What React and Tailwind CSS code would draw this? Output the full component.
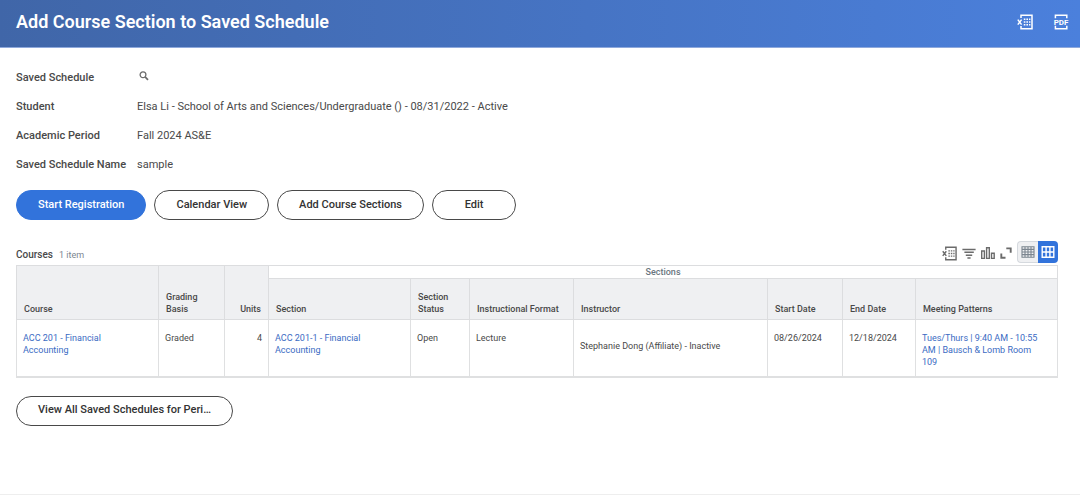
const fields = [
  { label: 'Saved Schedule', value: null },
  { label: 'Student', value: 'Elsa Li - School of Arts and Sciences/Undergraduate () - 08/31/2022 - Active' },
  { label: 'Academic Period', value: 'Fall 2024 AS&E' },
  { label: 'Saved Schedule Name', value: 'sample' },
]

const sectionColumns = [
  'Section',
  'Section Status',
  'Instructional Format',
  'Instructor',
  'Start Date',
  'End Date',
  'Meeting Patterns',
]

const rows = [
  {
    course: 'ACC 201 - Financial Accounting',
    grading: 'Graded',
    units: 4,
    section: 'ACC 201-1 - Financial Accounting',
    status: 'Open',
    format: 'Lecture',
    instructor: 'Stephanie Dong (Affiliate) - Inactive',
    start: '08/26/2024',
    end: '12/18/2024',
    meeting: 'Tues/Thurs | 9:40 AM - 10:55 AM | Bausch & Lomb Room 109',
  },
]

function ExcelIcon({ className }) {
  return (
    <svg viewBox="0 0 16 16" className={className} fill="none" stroke="currentColor" aria-hidden="true">
      <path d="M4 4V1.3h11v13.4H4V12" strokeWidth="1.5" />
      <path d="M.8 5.6l3.8 5M4.6 5.6l-3.8 5" strokeWidth="1.5" />
      <path d="M6.8 5.2h1.6M9.4 5.2H11M12 5.2h1.4M6.8 8h1.6M9.4 8H11M12 8h1.4M6.8 10.8h1.6M9.4 10.8H11M12 10.8h1.4" strokeWidth="1.5" />
    </svg>
  )
}

function PdfIcon({ className }) {
  return (
    <svg viewBox="0 0 16 16" className={className} fill="none" stroke="currentColor" aria-hidden="true">
      <path d="M2.4 4.2V1.3h11.4v2.9M2.4 11.8v2.9h11.4v-2.9" strokeWidth="1.5" />
      <text
        x="8"
        y="10.5"
        textAnchor="middle"
        fill="currentColor"
        stroke="none"
        className="font-['Roboto',sans-serif] text-[8px] font-bold"
      >
        PDF
      </text>
    </svg>
  )
}

function SearchIcon({ className }) {
  return (
    <svg viewBox="0 0 10 10" className={className} fill="none" stroke="currentColor" aria-hidden="true">
      <circle cx="4" cy="3.8" r="2.9" strokeWidth="1.3" />
      <path d="M6.1 5.9L9 8.8" strokeWidth="1.7" />
    </svg>
  )
}

function FilterIcon({ className }) {
  return (
    <svg viewBox="0 0 14 14" className={className} fill="none" stroke="currentColor" strokeWidth="1.5" aria-hidden="true">
      <path d="M.4 3.4h13.2M2.4 6.3h9.4M3.8 9.2h6.4M5.4 12h3.2" />
    </svg>
  )
}

function ChartIcon({ className }) {
  return (
    <svg viewBox="0 0 14 14" className={className} fill="none" stroke="currentColor" strokeWidth="1.4" aria-hidden="true">
      <path d="M.7 5h2.7v7.4H.7zM5.6 1.7h2.7v10.7H5.6zM10.5 7.2h2.7v5.2h-2.7z" />
    </svg>
  )
}

function ExpandIcon({ className }) {
  return (
    <svg viewBox="0 0 12 12" className={className} fill="none" stroke="currentColor" strokeWidth="1.9" aria-hidden="true">
      <path d="M6.3 1.4h4.4v4.4M1.3 6.6v4.2h4.2" />
    </svg>
  )
}

function GridIcon({ className }) {
  return (
    <svg viewBox="0 0 14 12" className={className} fill="none" stroke="currentColor" aria-hidden="true">
      <path d="M1 .8h12v10.4H1zM1 3.4h12M1 6h12M1 8.6h12M4 .8v10.4M7 .8v10.4M10 .8v10.4" strokeWidth="1.1" />
    </svg>
  )
}

function ExpandedGridIcon({ className }) {
  return (
    <svg viewBox="0 0 14 12" className={className} fill="none" stroke="currentColor" aria-hidden="true">
      <path d="M1.2 .8h11.6v10.4H1.2zM1.2 6h11.6M5.1 .8v10.4M8.9 .8v10.4" strokeWidth="1.4" />
    </svg>
  )
}

function PillButton({ primary, children }) {
  return (
    <button
      type="button"
      className={`h-[30px] min-w-[84px] rounded-full border px-[21px] text-[11px] font-medium ${
        primary ? 'border-[#3273db] bg-[#3273db] text-white' : 'border-[#494949] bg-white text-[#333333]'
      }`}
    >
      {children}
    </button>
  )
}

function HeaderCell({ children, className = '', ...props }) {
  return (
    <th
      scope="col"
      className={`border border-[#dcdddf] bg-[#eff0f2] px-[7px] pb-1 text-left align-bottom font-medium ${className}`}
      {...props}
    >
      {children}
    </th>
  )
}

function Cell({ children, className = 'pt-3' }) {
  return <td className={`border border-[#dfe0e1] px-[6px] align-top ${className}`}>{children}</td>
}

export default function App() {
  return (
    <div className="min-h-screen bg-white font-['Roboto',sans-serif] text-[#494949]">
      <header className="flex h-12 items-center justify-between border-b border-[#8fa9dc] bg-linear-to-r from-[#4066a8] to-[#4b80dc] pr-[11px] pl-4 text-white">
        <h1 className="pb-1 text-lg font-semibold">Add Course Section to Saved Schedule</h1>
        <div className="flex gap-5 pb-[3px]">
          <button type="button" aria-label="Export to Excel">
            <ExcelIcon className="size-4" />
          </button>
          <button type="button" aria-label="View printable version">
            <PdfIcon className="size-4" />
          </button>
        </div>
      </header>

      <main className="border-b border-[#eeeeee] pt-[15px] pr-[22px] pb-[68px] pl-4">
        <dl className="text-[11px] leading-[29px]">
          {fields.map((field) => (
            <div key={field.label} className="flex">
              <dt className="w-[121px] shrink-0 font-medium">{field.label}</dt>
              <dd>
                {field.value || (
                  <button type="button" aria-label="Search" className="block px-[2px] pt-2 pb-[11px] text-[#6b6b6b]">
                    <SearchIcon className="size-[10px]" />
                  </button>
                )}
              </dd>
            </div>
          ))}
        </dl>

        <div className="mt-[11px] flex flex-wrap gap-2">
          <PillButton primary>Start Registration</PillButton>
          <PillButton>Calendar View</PillButton>
          <PillButton>Add Course Sections</PillButton>
          <PillButton>Edit</PillButton>
        </div>

        <div className="mt-[21px] flex h-6 items-end justify-between">
          <div className="flex items-baseline gap-[6px] leading-5">
            <h2 className="text-[10px] font-medium">Courses</h2>
            <span className="text-[9px] text-[#7b858f]">1 item</span>
          </div>
          <div className="flex h-6 items-center gap-[5px] text-[#6b6b6b]">
            <button type="button" aria-label="Export to Excel">
              <ExcelIcon className="size-[15px]" />
            </button>
            <button type="button" aria-label="Filter">
              <FilterIcon className="size-[14px]" />
            </button>
            <button type="button" aria-label="Chart">
              <ChartIcon className="size-[14px]" />
            </button>
            <button type="button" aria-label="Full screen">
              <ExpandIcon className="size-3" />
            </button>
            <div className="flex h-[22px] self-start">
              <button
                type="button"
                aria-label="Grid view"
                className="flex w-[21px] items-center justify-center rounded-l-sm border border-r-0 border-[#d5d9de] bg-[#eff0f2] text-[#7b858f]"
              >
                <GridIcon className="w-[14px]" />
              </button>
              <button
                type="button"
                aria-label="Expanded grid view"
                className="flex w-5 items-center justify-center rounded-r-sm bg-[#3273db] text-white"
              >
                <ExpandedGridIcon className="w-[14px]" />
              </button>
            </div>
          </div>
        </div>

        <table className="w-full table-fixed border-collapse border-b-2 border-[#dfe0e1] text-[9px] leading-3">
          <colgroup>
            <col className="w-[142px]" />
            <col className="w-[66px]" />
            <col className="w-[44px]" />
            <col className="w-[142px]" />
            <col className="w-[59px]" />
            <col className="w-[104px]" />
            <col className="w-[194px]" />
            <col className="w-[75px]" />
            <col className="w-[73px]" />
            <col className="w-[142px]" />
          </colgroup>
          <thead>
            <tr className="h-[13px]">
              <HeaderCell rowSpan={2}>Course</HeaderCell>
              <HeaderCell rowSpan={2}>
                Grading
                <br />
                Basis
              </HeaderCell>
              <HeaderCell rowSpan={2} className="text-right">
                Units
              </HeaderCell>
              <th
                scope="colgroup"
                colSpan={7}
                className="border border-[#dcdddf] text-center font-medium text-[#6b7680]"
              >
                Sections
              </th>
            </tr>
            <tr className="h-[41px]">
              {sectionColumns.map((name) => (
                <HeaderCell key={name}>{name}</HeaderCell>
              ))}
            </tr>
          </thead>
          <tbody>
            {rows.map((row) => (
              <tr key={row.section} className="h-[57px]">
                <Cell className="pt-3 pr-[50px]">
                  <a href="#course" className="text-[#3b6bc3]">
                    {row.course}
                  </a>
                </Cell>
                <Cell>{row.grading}</Cell>
                <Cell className="pt-3 text-right">{row.units}</Cell>
                <Cell className="pt-3 pr-[46px]">
                  <a href="#section" className="text-[#3b6bc3]">
                    {row.section}
                  </a>
                </Cell>
                <Cell>{row.status}</Cell>
                <Cell>{row.format}</Cell>
                <Cell className="pt-5">{row.instructor}</Cell>
                <Cell>{row.start}</Cell>
                <Cell>{row.end}</Cell>
                <Cell className="pt-3 pr-4">
                  <a href="#meeting" className="text-[#3b6bc3]">
                    {row.meeting}
                  </a>
                </Cell>
              </tr>
            ))}
          </tbody>
        </table>

        <div className="mt-[18px]">
          <PillButton>View All Saved Schedules for Peri…</PillButton>
        </div>
      </main>
    </div>
  )
}
